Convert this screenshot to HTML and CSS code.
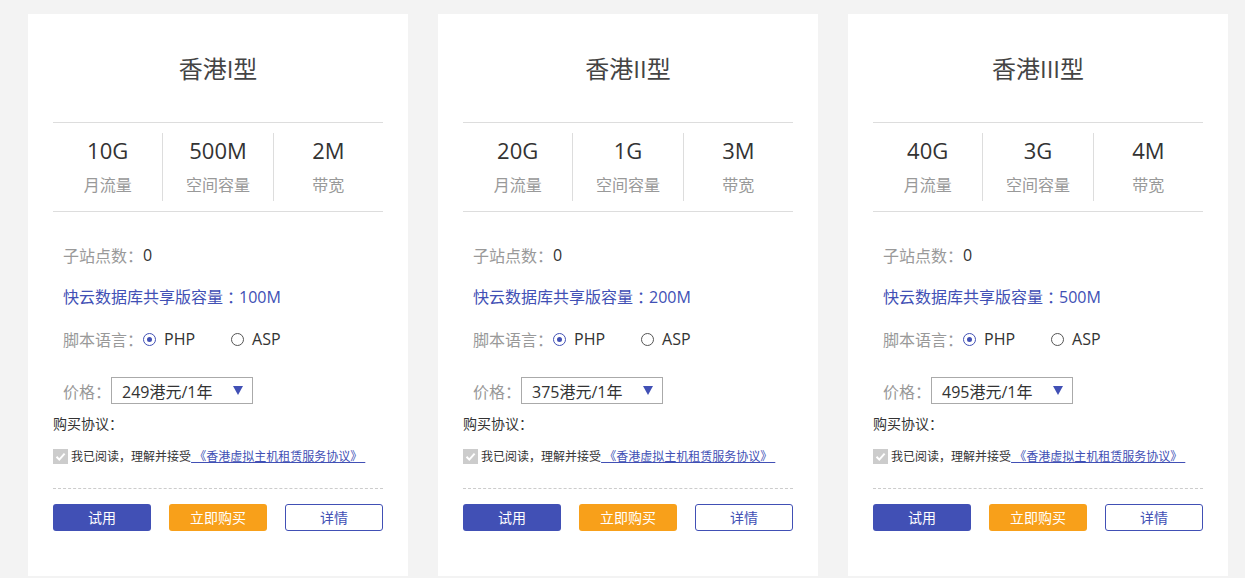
FILE: index.html
```html
<!DOCTYPE html>
<html lang="zh-CN">
<head>
<meta charset="utf-8">
<title>香港虚拟主机</title>
<link rel="stylesheet" href="styles.css">
</head>
<body>
<div class="plans">
  <div class="card">
    <div class="title">香港I型</div>
    <div class="stats">
      <div class="stat"><div class="num">10G</div><div class="lbl">月流量</div></div>
      <div class="stat"><div class="num">500M</div><div class="lbl">空间容量</div></div>
      <div class="stat"><div class="num">2M</div><div class="lbl">带宽</div></div>
    </div>
    <div class="info">
      <div class="row"><span class="key">子站点数<span class="p">：</span></span><span class="val">0</span></div>
      <div class="row blue">快云数据库共享版容量<span class="p">：</span>100M</div>
      <div class="row"><span class="key">脚本语言<span class="p">：</span></span><span class="radio on"></span><span class="opt">PHP</span><span class="radio"></span><span class="opt">ASP</span></div>
      <div class="price"><span class="key">价格<span class="p">：</span></span><div class="select"><span>249港元/1年</span><span class="tri"></span></div></div>
    </div>
    <div class="agree-title">购买协议<span class="p">：</span></div>
    <div class="agree"><span class="check"><svg viewBox="0 0 15 15" width="15" height="15"><path d="M3.5 7.8 L6.3 10.6 L11.6 4.6" fill="none" stroke="#fff" stroke-width="2"/></svg></span><span class="atext">我已阅读<span class="p">，</span>理解并接受</span><a class="link" href="#">&nbsp;《香港虚拟主机租赁服务协议》&nbsp;</a></div>
    <div class="buttons">
      <a class="btn try" href="#">试用</a>
      <a class="btn buy" href="#">立即购买</a>
      <a class="btn more" href="#">详情</a>
    </div>
  </div>
  <div class="card">
    <div class="title">香港II型</div>
    <div class="stats">
      <div class="stat"><div class="num">20G</div><div class="lbl">月流量</div></div>
      <div class="stat"><div class="num">1G</div><div class="lbl">空间容量</div></div>
      <div class="stat"><div class="num">3M</div><div class="lbl">带宽</div></div>
    </div>
    <div class="info">
      <div class="row"><span class="key">子站点数<span class="p">：</span></span><span class="val">0</span></div>
      <div class="row blue">快云数据库共享版容量<span class="p">：</span>200M</div>
      <div class="row"><span class="key">脚本语言<span class="p">：</span></span><span class="radio on"></span><span class="opt">PHP</span><span class="radio"></span><span class="opt">ASP</span></div>
      <div class="price"><span class="key">价格<span class="p">：</span></span><div class="select"><span>375港元/1年</span><span class="tri"></span></div></div>
    </div>
    <div class="agree-title">购买协议<span class="p">：</span></div>
    <div class="agree"><span class="check"><svg viewBox="0 0 15 15" width="15" height="15"><path d="M3.5 7.8 L6.3 10.6 L11.6 4.6" fill="none" stroke="#fff" stroke-width="2"/></svg></span><span class="atext">我已阅读<span class="p">，</span>理解并接受</span><a class="link" href="#">&nbsp;《香港虚拟主机租赁服务协议》&nbsp;</a></div>
    <div class="buttons">
      <a class="btn try" href="#">试用</a>
      <a class="btn buy" href="#">立即购买</a>
      <a class="btn more" href="#">详情</a>
    </div>
  </div>
  <div class="card">
    <div class="title">香港III型</div>
    <div class="stats">
      <div class="stat"><div class="num">40G</div><div class="lbl">月流量</div></div>
      <div class="stat"><div class="num">3G</div><div class="lbl">空间容量</div></div>
      <div class="stat"><div class="num">4M</div><div class="lbl">带宽</div></div>
    </div>
    <div class="info">
      <div class="row"><span class="key">子站点数<span class="p">：</span></span><span class="val">0</span></div>
      <div class="row blue">快云数据库共享版容量<span class="p">：</span>500M</div>
      <div class="row"><span class="key">脚本语言<span class="p">：</span></span><span class="radio on"></span><span class="opt">PHP</span><span class="radio"></span><span class="opt">ASP</span></div>
      <div class="price"><span class="key">价格<span class="p">：</span></span><div class="select"><span>495港元/1年</span><span class="tri"></span></div></div>
    </div>
    <div class="agree-title">购买协议<span class="p">：</span></div>
    <div class="agree"><span class="check"><svg viewBox="0 0 15 15" width="15" height="15"><path d="M3.5 7.8 L6.3 10.6 L11.6 4.6" fill="none" stroke="#fff" stroke-width="2"/></svg></span><span class="atext">我已阅读<span class="p">，</span>理解并接受</span><a class="link" href="#">&nbsp;《香港虚拟主机租赁服务协议》&nbsp;</a></div>
    <div class="buttons">
      <a class="btn try" href="#">试用</a>
      <a class="btn buy" href="#">立即购买</a>
      <a class="btn more" href="#">详情</a>
    </div>
  </div>
</div>
</body>
</html>
```
FILE: styles.css
```css
html, body {
  margin: 0;
  padding: 0;
  background: #f3f3f3;
  font-family: "Open Sans", "Noto Sans CJK SC", sans-serif;
  color: #333;
}
.plans {
  display: flex;
  gap: 30px;
  padding: 14px 0 0 28px;
}
.card {
  width: 380px;
  height: 562px;
  box-sizing: border-box;
  background: #fff;
  padding: 0 25px;
}
.p {
  font-family: "Noto Sans CJK TC", "Noto Sans CJK SC", sans-serif;
}
.title {
  height: 108px;
  box-sizing: border-box;
  padding-top: 39px;
  line-height: 32px;
  font-size: 24px;
  color: #444;
  text-align: center;
}
.stats {
  display: flex;
  border-top: 1px solid #ddd;
  border-bottom: 1px solid #ddd;
  padding: 10px 0;
}
.stat {
  flex: 1;
  text-align: center;
  border-left: 1px solid #ddd;
}
.stat:first-child { border-left: none; }
.num {
  font-size: 22px;
  line-height: 34px;
  padding-bottom: 2px;
  color: #333;
}
.lbl {
  font-size: 16px;
  line-height: 32px;
  color: #999;
}
.info {
  padding: 22px 0 0 10px;
}
.row {
  display: flex;
  align-items: center;
  height: 42px;
  font-size: 16px;
  line-height: 42px;
}
.key { color: #999; }
.val { color: #333; }
.blue { color: #4150b5; }
.radio {
  width: 11px;
  height: 11px;
  border: 1px solid #555;
  border-radius: 50%;
  margin-right: 8px;
  position: relative;
  box-sizing: content-box;
}
.radio.on { border-color: #4150b5; }
.radio.on::after {
  content: "";
  position: absolute;
  left: 3px;
  top: 3px;
  width: 5px;
  height: 5px;
  border-radius: 50%;
  background: #4150b5;
}
.opt {
  color: #333;
  margin-right: 36px;
}
.price {
  display: flex;
  align-items: center;
  margin-top: 17px;
  font-size: 16px;
}
.select {
  width: 142px;
  height: 27px;
  box-sizing: border-box;
  border: 1px solid #aaa;
  display: flex;
  align-items: center;
  justify-content: space-between;
  padding: 0 9px 0 10px;
  color: #333;
  font-size: 16px;
}
.tri {
  width: 0;
  height: 0;
  border-left: 5.5px solid transparent;
  border-right: 5.5px solid transparent;
  border-top: 9px solid #4150b5;
}
.agree-title {
  margin-top: 9px;
  font-size: 14px;
  line-height: 20px;
  color: #333;
}
.agree {
  margin-top: 12px;
  display: flex;
  align-items: center;
  height: 20px;
  font-size: 12px;
  color: #333;
}
.check {
  width: 15px;
  height: 15px;
  background: #ccc;
  margin-right: 3px;
  display: block;
}
.check svg { display: block; }
.link {
  color: #4150b5;
  text-decoration: underline;
}
.buttons {
  margin-top: 22px;
  border-top: 1px dashed #ccc;
  padding-top: 15px;
  display: flex;
  justify-content: space-between;
}
.btn {
  width: 98px;
  height: 27px;
  box-sizing: border-box;
  border-radius: 3px;
  text-align: center;
  line-height: 27px;
  font-size: 14px;
  text-decoration: none;
}
.try { background: #4150b5; color: #fff; }
.buy { background: #f8a01a; color: #fff; }
.more { background: #fff; color: #4150b5; border: 1px solid #4150b5; line-height: 25px; }
```
